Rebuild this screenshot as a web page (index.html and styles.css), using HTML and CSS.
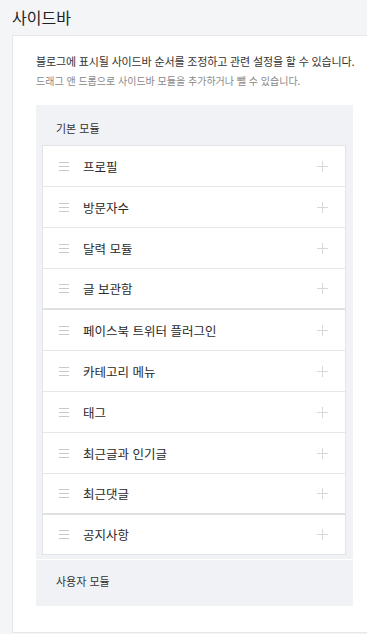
FILE: index.html
```html
<!doctype html>
<html lang="ko">

<head>
    <meta charset="UTF-8">
    <title>사이드바</title>
    <link rel="stylesheet" href="styles.css">
</head>

<body>
    <h2 class="title">사이드바</h2>

    <div class="card">
        <p class="desc">블로그에 표시될 사이드바 순서를 조정하고 관련 설정을 할 수 있습니다.</p>
        <p class="desc sub">드래그 앤 드롭으로 사이드바 모듈을 추가하거나 뺄 수 있습니다.</p>

        <div class="modules">
            <div class="section">
                <h3 class="label">기본 모듈</h3>
                <ul class="list">
                    <li><span class="handle"></span><span class="name">프로필</span><span class="plus"></span></li>
                    <li><span class="handle"></span><span class="name">방문자수</span><span class="plus"></span></li>
                    <li><span class="handle"></span><span class="name">달력 모듈</span><span class="plus"></span></li>
                    <li class="end"><span class="handle"></span><span class="name">글 보관함</span><span class="plus"></span></li>
                    <li><span class="handle"></span><span class="name">페이스북 트위터 플러그인</span><span class="plus"></span></li>
                    <li><span class="handle"></span><span class="name">카테고리 메뉴</span><span class="plus"></span></li>
                    <li><span class="handle"></span><span class="name">태그</span><span class="plus"></span></li>
                    <li><span class="handle"></span><span class="name">최근글과 인기글</span><span class="plus"></span></li>
                    <li class="end"><span class="handle"></span><span class="name">최근댓글</span><span class="plus"></span></li>
                    <li><span class="handle"></span><span class="name">공지사항</span><span class="plus"></span></li>
                </ul>
            </div>
            <div class="section user">
                <h3 class="label">사용자 모듈</h3>
            </div>
        </div>
    </div>
</body>

</html>
```

FILE: styles.css
```css
* {
    margin: 0;
    padding: 0;
}

ul,
li {
    list-style: none;
}

html {
    overflow: hidden;
}

body {
    background: #f4f5f7;
    font-family: "Noto Sans CJK KR", "Noto Sans", sans-serif;
    color: #333;
}

.title {
    height: 35px;
    line-height: 34px;
    padding-left: 12px;
    font-size: 16px;
    font-weight: normal;
    color: #222;
}

.card {
    margin-left: 12px;
    margin-right: -10px;
    height: 598px;
    padding: 15px 0 0 23px;
    background: #fff;
    border: 1px solid #e6e7ea;
    box-sizing: border-box;
}

.desc {
    font-size: 11px;
    line-height: 20px;
    letter-spacing: -0.15px;
    color: #333;
}

.desc.sub {
    font-size: 10px;
    letter-spacing: 0;
    color: #888;
}

.modules {
    width: 317px;
    margin-top: 14px;
    background: #f1f2f5;
}

.section {
    padding: 10px 7px 4px 6px;
}

.label {
    height: 26px;
    line-height: 26px;
    padding-left: 14px;
    margin-bottom: 4px;
    font-size: 11px;
    font-weight: normal;
    color: #333;
}

.list {
    background: #fff;
    border: 1px solid #e3e4e8;
}

.list > li {
    display: flex;
    align-items: center;
    height: 40px;
    border-bottom: 1px solid #e6e7ea;
}

.list > li.end {
    height: 39px;
    border-bottom: 2px solid #dfe0e4;
}

.list > li:last-child {
    height: 39px;
    border-bottom: none;
}

.handle {
    width: 10px;
    height: 7px;
    margin: 0 14px 0 16px;
    border-top: 1px solid #c9c9c9;
    border-bottom: 1px solid #c9c9c9;
    background: linear-gradient(#c9c9c9, #c9c9c9) center / 100% 1px no-repeat;
}

.name {
    flex: 1;
    font-size: 12.5px;
    color: #2a2a2a;
}

.plus {
    position: relative;
    width: 11px;
    height: 11px;
    margin-right: 17px;
}

.plus::before,
.plus::after {
    content: "";
    position: absolute;
    background: #d8d8d8;
}

.plus::before {
    left: 5px;
    top: 0;
    width: 1px;
    height: 11px;
}

.plus::after {
    left: 0;
    top: 5px;
    width: 11px;
    height: 1px;
}

.section.user {
    height: 47px;
    padding: 8px 7px 0 6px;
    border-top: 1px solid #fff;
    box-sizing: border-box;
}
```
